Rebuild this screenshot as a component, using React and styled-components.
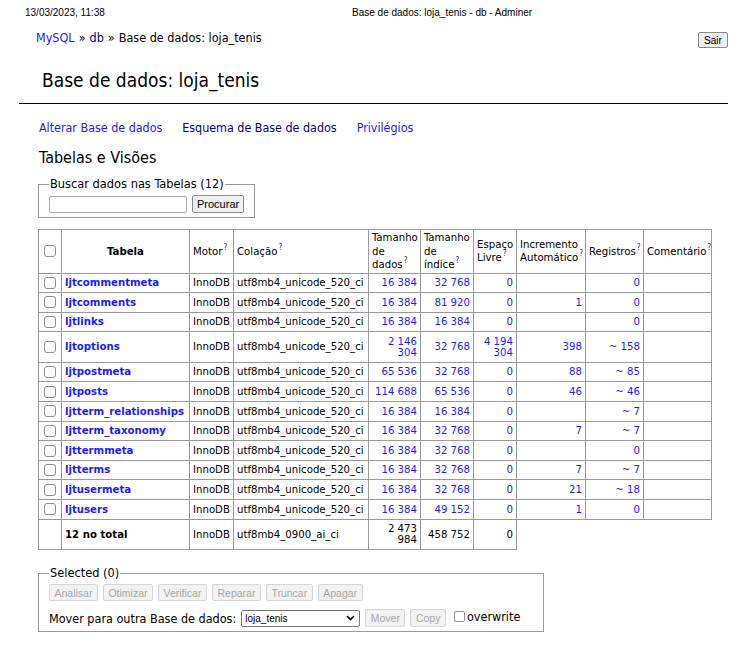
import React from "react";
import styled, { createGlobalStyle } from "styled-components";

const Global = createGlobalStyle`
  html, body { margin: 0; padding: 0; background: #fff; }
  body {
    font-family: "DejaVu Sans Condensed", "DejaVu Sans", Verdana, sans-serif;
    font-size: 11px;
    color: #000;
  }
`;

const Page = styled.div`
  width: 750px;
  min-height: 648px;
  display: flex;
  flex-direction: column;
`;

const PrintHeader = styled.div`
  display: grid;
  grid-template-columns: 327px 1fr;
  padding: 6px 0 0 25px;
  height: 25px;
  font-family: "Liberation Sans", Arial, sans-serif;
  font-size: 10px;
  line-height: 14px;
`;

const Breadcrumb = styled.div`
  display: flex;
  justify-content: space-between;
  align-items: flex-start;
  padding: 0 22px 0 36px;
  line-height: 14px;
  font-size: 12.5px;
`;

const Crumbs = styled.div`
  display: flex;
  gap: 4px;
`;

const Link = styled.a`
  color: ${(p) => (p.$visited ? "#000080" : "#1a1aff")};
  text-decoration: none;
  font-weight: ${(p) => (p.$bold ? "bold" : "normal")};
`;

const Logout = styled.button`
  margin-top: 1px;
  height: 16px;
  width: 30px;
  padding: 0;
  font-family: "Liberation Sans", Arial, sans-serif;
  font-size: 10px;
  color: #000;
  background: #efefef;
  border: 1px solid #8a8a8a;
  border-radius: 2px;
`;

const Title = styled.h1`
  margin: 21px 0 0 42px;
  font-size: 19px;
  line-height: 22px;
  font-weight: normal;
`;

const Rule = styled.hr`
  margin: 12px 22px 0 19px;
  border: 0;
  border-top: 1px solid #000;
  height: 0;
`;

const Content = styled.div`
  padding-left: 38px;
  display: flex;
  flex-direction: column;
  align-items: flex-start;
`;

const NavLinks = styled.div`
  display: flex;
  gap: 20px;
  margin: 16px 0 0 1px;
  font-size: 12.4px;
  line-height: 15px;
`;

const SectionTitle = styled.h2`
  margin: 13px 0 0 1px;
  font-size: 16px;
  line-height: 19px;
  font-weight: normal;
`;

const Fieldset = styled.fieldset`
  margin: ${(p) => p.$mt}px 0 0 0;
  padding: ${(p) => p.$pt}px 10px ${(p) => p.$pb}px 10px;
  border: 1px solid #999;
  min-width: 0;
  display: flex;
  flex-direction: column;
  gap: ${(p) => p.$gap || 0}px;
  ${(p) => (p.$width ? `width: ${p.$width}px; box-sizing: border-box;` : "")}
`;

const Legend = styled.legend`
  padding: 0 1px;
  font-size: 12.7px;
  line-height: 14px;
`;

const Row = styled.div`
  display: flex;
  align-items: center;
  gap: ${(p) => p.$gap}px;
`;

const TextInput = styled.input`
  box-sizing: border-box;
  width: 138px;
  height: 17px;
  margin: 1px 0 0 0;
  padding: 0 2px;
  border: 1px solid #aaa;
  border-radius: 2px;
`;

const Btn = styled.button`
  box-sizing: border-box;
  height: ${(p) => p.$h || 17}px;
  padding: 0 ${(p) => p.$px || 4.5}px;
  font-family: "Liberation Sans", Arial, sans-serif;
  font-size: ${(p) => p.$fs || 10.5}px;
  color: ${(p) => (p.disabled ? "#a6a6a6" : "#000")};
  background: ${(p) => (p.disabled ? "#f2f2f2" : "#efefef")};
  border: 1px solid ${(p) => (p.disabled ? "#d6d6d6" : "#8a8a8a")};
  border-radius: 2px;
`;

const Table = styled.table`
  margin-top: 11px;
  border-collapse: collapse;
  table-layout: fixed;
  width: 673px;
  font-size: 11.3px;
`;

const Th = styled.th`
  border: 1px solid #999;
  padding: 1px 3px;
  line-height: 13.5px;
  font-weight: ${(p) => (p.$bold ? "bold" : "normal")};
  text-align: ${(p) => (p.$center ? "center" : "left")};
  vertical-align: middle;
`;

const Td = styled.td`
  border: 1px solid #999;
  padding: 3.3px 3px;
  line-height: 11.5px;
  text-align: ${(p) => (p.$right ? "right" : "left")};
  vertical-align: middle;
  white-space: ${(p) => (p.$nowrap ? "nowrap" : "normal")};
  overflow: hidden;
`;

const Help = styled.span`
  position: relative;
  top: -5px;
  color: #1a1aff;
  font-size: 8px;
  line-height: 0;
  margin-left: 1px;
`;

const Check = styled.input.attrs({ type: "checkbox" })`
  appearance: none;
  -webkit-appearance: none;
  display: block;
  width: 12px;
  height: 12px;
  margin: 0 auto;
  border: 1px solid #8f8f8f;
  border-radius: 3px;
  background: #fff;
  box-sizing: border-box;
`;

const InlineCheck = styled(Check)`
  margin: 0 2px 0 0;
  width: 11px;
  height: 11px;
  border-radius: 2px;
  display: inline-block;
`;

const Label = styled.label`
  display: flex;
  align-items: center;
  font-size: 12.5px;
  margin-left: 3px;
  margin-top: -3px;
`;

const SelectBox = styled.div`
  box-sizing: border-box;
  width: 119px;
  height: 17px;
  border: 1px solid #777;
  border-radius: 2px;
  display: flex;
  align-items: center;
  justify-content: space-between;
  padding: 0 4px 0 3px;
  font-family: "Liberation Sans", Arial, sans-serif;
  font-size: 10px;
`;

const MoveLabel = styled.span`
  font-size: 12.5px;
`;

const cols = [23, 128, 44, 135, 52, 53, 43, 69, 58, 68];

const rows = [
  ["ljtcommentmeta", "16 384", "32 768", "0", "", "0"],
  ["ljtcomments", "16 384", "81 920", "0", "1", "0"],
  ["ljtlinks", "16 384", "16 384", "0", "", "0"],
  ["ljtoptions", "2 146 304", "32 768", "4 194 304", "398", "~ 158"],
  ["ljtpostmeta", "65 536", "32 768", "0", "88", "~ 85"],
  ["ljtposts", "114 688", "65 536", "0", "46", "~ 46"],
  ["ljtterm_relationships", "16 384", "16 384", "0", "", "~ 7"],
  ["ljtterm_taxonomy", "16 384", "32 768", "0", "7", "~ 7"],
  ["ljttermmeta", "16 384", "32 768", "0", "", "0"],
  ["ljtterms", "16 384", "32 768", "0", "7", "~ 7"],
  ["ljtusermeta", "16 384", "32 768", "0", "21", "~ 18"],
  ["ljtusers", "16 384", "49 152", "0", "1", "0"],
];

const Chevron = () => (
  <svg width="9" height="6" viewBox="0 0 9 6">
    <path d="M1 1 L4.5 4.5 L8 1" fill="none" stroke="#000" strokeWidth="1.6" />
  </svg>
);

export default function App() {
  return (
    <Page>
      <Global />
      <PrintHeader>
        <span>13/03/2023, 11:38</span>
        <span>Base de dados: loja_tenis - db - Adminer</span>
      </PrintHeader>
      <Breadcrumb>
        <Crumbs>
          <Link href="#">MySQL</Link>
          <span>»</span>
          <Link href="#" $visited>db</Link>
          <span>»</span>
          <span>Base de dados: loja_tenis</span>
        </Crumbs>
        <Logout>Sair</Logout>
      </Breadcrumb>
      <Title>Base de dados: loja_tenis</Title>
      <Rule />
      <Content>
        <NavLinks>
          <Link href="#">Alterar Base de dados</Link>
          <Link href="#" $visited>Esquema de Base de dados</Link>
          <Link href="#">Privilégios</Link>
        </NavLinks>
        <SectionTitle>Tabelas e Visões</SectionTitle>
        <Fieldset $mt={10} $pt={4} $pb={4}>
          <Legend>Buscar dados nas Tabelas (12)</Legend>
          <Row $gap={5}>
            <TextInput />
            <Btn $h={18} $px={4} $fs={11}>Procurar</Btn>
          </Row>
        </Fieldset>
        <Table>
          <colgroup>
            {cols.map((w, i) => (
              <col key={i} style={{ width: w }} />
            ))}
          </colgroup>
          <thead>
            <tr>
              <Th $center><Check /></Th>
              <Th $center $bold>Tabela</Th>
              <Th>Motor<Help>?</Help></Th>
              <Th>Colação<Help>?</Help></Th>
              <Th>Tamanho de dados<Help>?</Help></Th>
              <Th>Tamanho de índice<Help>?</Help></Th>
              <Th>Espaço Livre<Help>?</Help></Th>
              <Th>Incremento Automático<Help>?</Help></Th>
              <Th>Registros<Help>?</Help></Th>
              <Th>Comentário<Help>?</Help></Th>
            </tr>
          </thead>
          <tbody>
            {rows.map((r) => (
              <tr key={r[0]}>
                <Td><Check /></Td>
                <Td $nowrap><Link href="#" $bold>{r[0]}</Link></Td>
                <Td $nowrap>InnoDB</Td>
                <Td $nowrap>utf8mb4_unicode_520_ci</Td>
                <Td $right><Link href="#">{r[1]}</Link></Td>
                <Td $right><Link href="#">{r[2]}</Link></Td>
                <Td $right><Link href="#">{r[3]}</Link></Td>
                <Td $right><Link href="#">{r[4]}</Link></Td>
                <Td $right><Link href="#">{r[5]}</Link></Td>
                <Td></Td>
              </tr>
            ))}
            <tr>
              <Td></Td>
              <Td><b>12 no total</b></Td>
              <Td $nowrap>InnoDB</Td>
              <Td $nowrap>utf8mb4_0900_ai_ci</Td>
              <Td $right>2 473 984</Td>
              <Td $right>458 752</Td>
              <Td $right>0</Td>
            </tr>
          </tbody>
        </Table>
        <Fieldset $mt={16} $pt={4} $pb={4} $gap={8} $width={506}>
          <Legend>Selected (0)</Legend>
          <Row $gap={5}>
            {["Analisar", "Otimizar", "Verificar", "Reparar", "Truncar", "Apagar"].map((b) => (
              <Btn key={b} disabled>{b}</Btn>
            ))}
          </Row>
          <Row $gap={5}>
            <MoveLabel>Mover para outra Base de dados:</MoveLabel>
            <SelectBox>
              <span>loja_tenis</span>
              <Chevron />
            </SelectBox>
            <Btn disabled $h={18}>Mover</Btn>
            <Btn disabled $h={18}>Copy</Btn>
            <Label><InlineCheck />overwrite</Label>
          </Row>
        </Fieldset>
      </Content>
    </Page>
  );
}
